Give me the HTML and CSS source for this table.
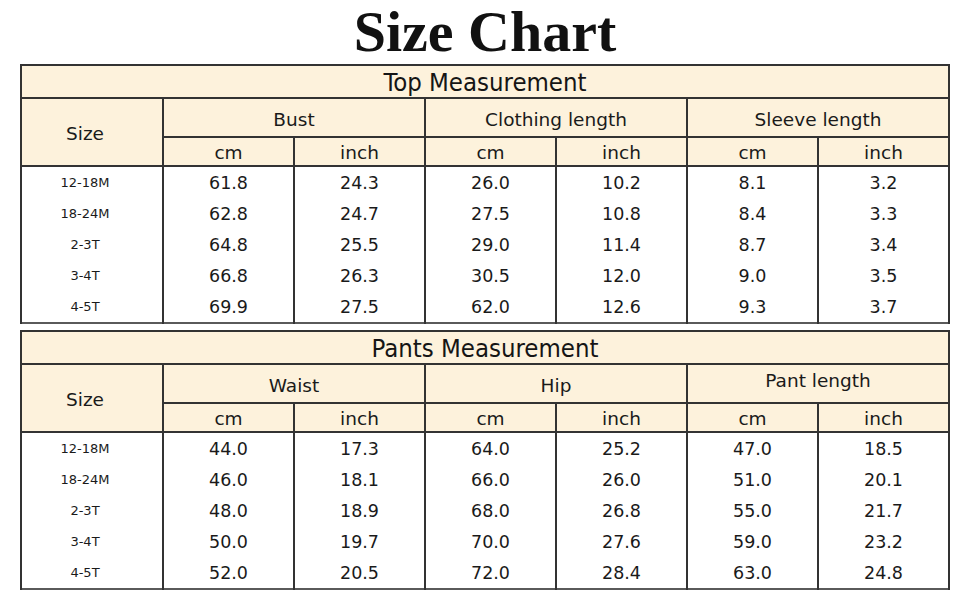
FILE: index.html
```html
<!DOCTYPE html>
<html lang="en">
<head>
<meta charset="utf-8">
<title>Size Chart</title>
<link rel="stylesheet" href="styles.css">
</head>
<body>
<div class="page">
  <h1 class="title">Size Chart</h1>

  <table class="chart">
    <colgroup>
      <col class="c-size"><col><col><col><col><col><col>
    </colgroup>
    <tr class="r-title"><th colspan="7" class="sec">Top Measurement</th></tr>
    <tr class="r-h1">
      <th rowspan="2" class="size-h">Size</th>
      <th colspan="2">Bust</th>
      <th colspan="2">Clothing length</th>
      <th colspan="2">Sleeve length</th>
    </tr>
    <tr class="r-h2"><th>cm</th><th>inch</th><th>cm</th><th>inch</th><th>cm</th><th>inch</th></tr>
    <tr class="r-d first"><td class="sz">12-18M</td><td>61.8</td><td>24.3</td><td>26.0</td><td>10.2</td><td>8.1</td><td>3.2</td></tr>
    <tr class="r-d"><td class="sz">18-24M</td><td>62.8</td><td>24.7</td><td>27.5</td><td>10.8</td><td>8.4</td><td>3.3</td></tr>
    <tr class="r-d"><td class="sz">2-3T</td><td>64.8</td><td>25.5</td><td>29.0</td><td>11.4</td><td>8.7</td><td>3.4</td></tr>
    <tr class="r-d"><td class="sz">3-4T</td><td>66.8</td><td>26.3</td><td>30.5</td><td>12.0</td><td>9.0</td><td>3.5</td></tr>
    <tr class="r-d last"><td class="sz">4-5T</td><td>69.9</td><td>27.5</td><td>62.0</td><td>12.6</td><td>9.3</td><td>3.7</td></tr>
  </table>

  <table class="chart second">
    <colgroup>
      <col class="c-size"><col><col><col><col><col><col>
    </colgroup>
    <tr class="r-title"><th colspan="7" class="sec">Pants Measurement</th></tr>
    <tr class="r-h1">
      <th rowspan="2" class="size-h">Size</th>
      <th colspan="2">Waist</th>
      <th colspan="2">Hip</th>
      <th colspan="2" class="raised">Pant length</th>
    </tr>
    <tr class="r-h2"><th>cm</th><th>inch</th><th>cm</th><th>inch</th><th>cm</th><th>inch</th></tr>
    <tr class="r-d first"><td class="sz">12-18M</td><td>44.0</td><td>17.3</td><td>64.0</td><td>25.2</td><td>47.0</td><td>18.5</td></tr>
    <tr class="r-d"><td class="sz">18-24M</td><td>46.0</td><td>18.1</td><td>66.0</td><td>26.0</td><td>51.0</td><td>20.1</td></tr>
    <tr class="r-d"><td class="sz">2-3T</td><td>48.0</td><td>18.9</td><td>68.0</td><td>26.8</td><td>55.0</td><td>21.7</td></tr>
    <tr class="r-d"><td class="sz">3-4T</td><td>50.0</td><td>19.7</td><td>70.0</td><td>27.6</td><td>59.0</td><td>23.2</td></tr>
    <tr class="r-d last"><td class="sz">4-5T</td><td>52.0</td><td>20.5</td><td>72.0</td><td>28.4</td><td>63.0</td><td>24.8</td></tr>
  </table>
</div>
</body>
</html>
```

FILE: styles.css
```css
html, body {
  margin: 0;
  padding: 0;
  background: #ffffff;
}

.page {
  padding: 0 20px;
  color: #1a1a1a;
}

.title {
  margin: 0;
  font-family: "Liberation Serif", "Times New Roman", serif;
  font-weight: 700;
  font-size: 58px;
  line-height: 64px;
  height: 64px;
  text-align: center;
  color: #111111;
}

.chart {
  width: 930px;
  table-layout: fixed;
  border-collapse: collapse;
  border: 2px solid #5a5a5a;
  border-top-color: #222222;
  font-family: "DejaVu Sans", sans-serif;
}

.chart.second {
  margin-top: 6px;
}

.c-size {
  width: 142px;
}

.chart th,
.chart td {
  padding: 0;
  text-align: center;
  vertical-align: middle;
  font-weight: 400;
}

.chart th {
  background: #fdf2dc;
  border: 2px solid #333333;
  font-size: 18.5px;
  line-height: 20px;
}

.r-title .sec {
  height: 31px;
  font-family: "DejaVu Sans Condensed", "Liberation Sans Narrow", sans-serif;
  font-size: 25.5px;
  letter-spacing: 0;
  line-height: 28px;
  color: #151515;
}

.r-h1 th {
  height: 33px;
  padding-top: 4px;
}

.r-h1 th.raised {
  height: 32px;
  padding-top: 0;
  padding-bottom: 5px;
}

.r-h2 th {
  height: 25px;
  padding-top: 2px;
}

.chart th.size-h {
  padding-top: 4px;
  padding-right: 14px;
}

.chart td {
  border-left: 2px solid #333333;
  border-right: 2px solid #333333;
  height: 31px;
  font-size: 17.5px;
  line-height: 20px;
}

.chart td.sz {
  font-size: 13px;
  padding-right: 14px;
}
```
